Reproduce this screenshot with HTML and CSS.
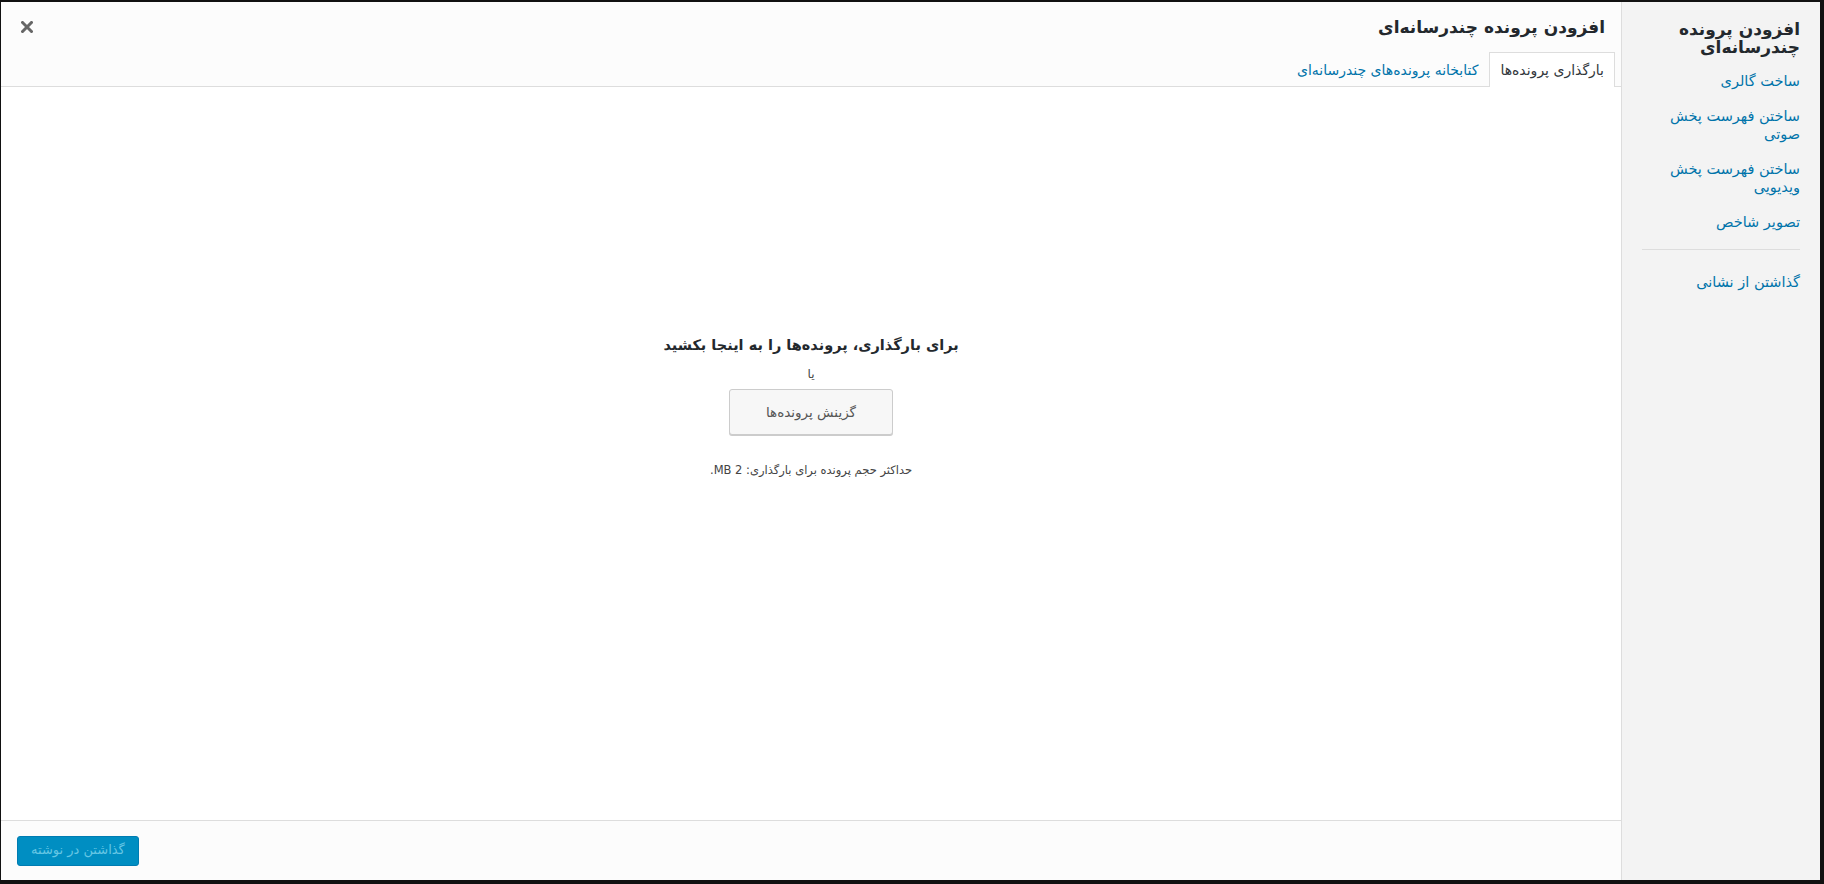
FILE: index.html
```html
<!DOCTYPE html>
<html lang="fa" dir="rtl">
<head>
<meta charset="utf-8">
<title>افزودن پرونده چندرسانه‌ای</title>
<link rel="stylesheet" href="styles.css">
</head>
<body>
<div class="modal">
  <aside class="menu">
    <h2 class="menu-heading">افزودن پرونده چندرسانه‌ای</h2>
    <a class="menu-item" href="#">ساخت گالری</a>
    <a class="menu-item" href="#">ساختن فهرست پخش صوتی</a>
    <a class="menu-item" href="#">ساختن فهرست پخش ویدیویی</a>
    <a class="menu-item" href="#">تصویر شاخص</a>
    <div class="separator"></div>
    <a class="menu-item" href="#">گذاشتن از نشانی</a>
  </aside>
  <main class="frame">
    <header class="frame-title">
      <h1>افزودن پرونده چندرسانه‌ای</h1>
      <button class="close" aria-label="بستن">
        <svg width="12" height="12" viewBox="0 0 12 12"><path d="M1.5 1.5 L10.5 10.5 M10.5 1.5 L1.5 10.5" stroke="#666" stroke-width="3" stroke-linecap="square"/></svg>
      </button>
    </header>
    <nav class="router">
      <a class="tab active" href="#">بارگذاری پرونده‌ها</a>
      <a class="tab" href="#">کتابخانه پرونده‌های چندرسانه‌ای</a>
    </nav>
    <section class="content">
      <div class="upload-ui">
        <h2 class="drop-text">برای بارگذاری، پرونده‌ها را به اینجا بکشید</h2>
        <p class="or">یا</p>
        <button class="browse">گزینش پرونده‌ها</button>
        <p class="max-size">حداکثر حجم پرونده برای بارگذاری: 2 MB.</p>
      </div>
    </section>
    <footer class="toolbar">
      <button class="insert" disabled>گذاشتن در نوشته</button>
    </footer>
  </main>
</div>
</body>
</html>
```

FILE: styles.css
```css
html, body {
  margin: 0;
  height: 100%;
}
body {
  background: #111;
  padding: 2px 4px 4px 1px;
  box-sizing: border-box;
  font-family: Tahoma, "DejaVu Sans", sans-serif;
  color: #444;
}
.modal {
  display: flex;
  height: 100%;
  background: #fff;
}
.menu {
  width: 199px;
  box-sizing: border-box;
  background: #f3f3f3;
  border-left: 1px solid #ddd;
  display: flex;
  flex-direction: column;
  padding-top: 18px;
}
.menu-heading {
  margin: 0 20px 8px;
  font-size: 17px;
  line-height: 18px;
  font-weight: bold;
  color: #23282d;
}
.menu-item {
  display: block;
  padding: 8px 20px;
  font-size: 14.5px;
  line-height: 18.5px;
  color: #0073aa;
  text-decoration: none;
}
.separator {
  border-top: 1px solid #ddd;
  margin: 10px 20px 15px;
}
.frame {
  flex: 1;
  display: flex;
  flex-direction: column;
  min-width: 0;
}
.frame-title {
  position: relative;
  height: 50px;
  background: #fcfcfc;
  padding: 0 16px;
}
.frame-title h1 {
  margin: 0;
  font-size: 17px;
  line-height: 50px;
  font-weight: bold;
  color: #23282d;
}
.close {
  position: absolute;
  left: 0;
  top: 0;
  width: 52px;
  height: 50px;
  border: 0;
  background: transparent;
  padding: 0;
  display: flex;
  align-items: center;
  justify-content: center;
  cursor: pointer;
}
.router {
  height: 34px;
  background: #fcfcfc;
  border-bottom: 1px solid #ddd;
  display: flex;
  align-items: flex-end;
  padding: 0 6px;
}
.tab {
  display: block;
  height: 35px;
  box-sizing: border-box;
  padding: 0 10px;
  font-size: 14px;
  line-height: 34px;
  color: #0073aa;
  text-decoration: none;
  border: 1px solid transparent;
  border-bottom: 0;
  margin-bottom: -1px;
}
.tab.active {
  background: #fff;
  border-color: #ddd;
  color: #32373c;
}
.content {
  flex: 1;
  background: #fff;
  display: flex;
  justify-content: center;
}
.upload-ui {
  display: flex;
  flex-direction: column;
  align-items: center;
  padding-top: 244px;
}
.drop-text {
  margin: 0;
  font-size: 14.5px;
  line-height: 28px;
  font-weight: bold;
  color: #23282d;
}
.or {
  margin: 6px 0 0;
  font-size: 12px;
  line-height: 18px;
  color: #444;
}
.browse {
  margin-top: 6px;
  height: 46px;
  padding: 0 36px;
  font-family: inherit;
  font-size: 13.5px;
  color: #555;
  background: #f7f7f7;
  border: 1px solid #ccc;
  border-radius: 3px;
  box-shadow: 0 1px 0 #ccc;
}
.max-size {
  margin: 26px 0 0;
  font-size: 11.5px;
  line-height: 18px;
  color: #444;
}
.toolbar {
  height: 59px;
  border-top: 1px solid #ddd;
  background: #fcfcfc;
  display: flex;
  align-items: center;
  justify-content: flex-end;
  padding: 0 16px;
}
.insert {
  height: 30px;
  padding: 0 13px 2px;
  font-family: inherit;
  font-size: 13px;
  color: #66c6e4;
  background: #008ec2;
  border: 1px solid #007cb2;
  border-radius: 3px;
}
```
